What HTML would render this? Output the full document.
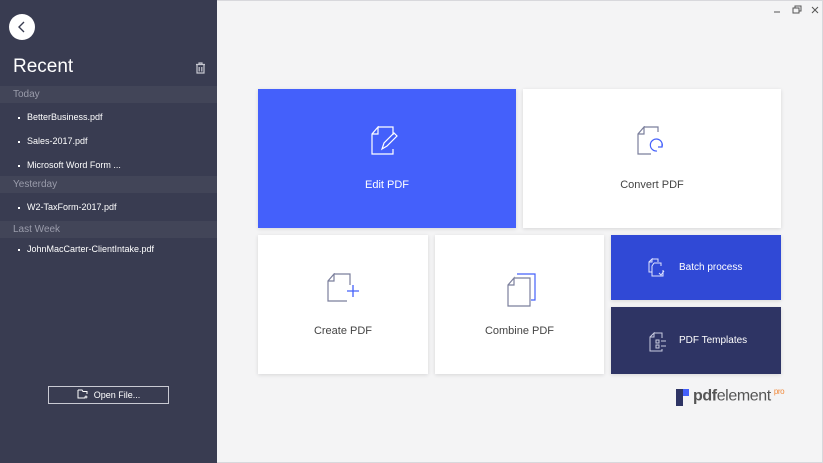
<!DOCTYPE html>
<html><head><style>
*{margin:0;padding:0;box-sizing:border-box}
body{width:823px;height:463px;overflow:hidden;background:#f4f4f5;font-family:"Liberation Sans",sans-serif;position:relative}
.side{position:absolute;left:0;top:0;width:217px;height:463px;background:#393c51;color:#fff}
.back{position:absolute;left:9px;top:14px;width:26px;height:26px;border-radius:50%;background:#fff}
.recent{position:absolute;left:13px;top:56px;font-size:19px;color:#fff}
.band{position:absolute;left:0;width:217px;height:17px;background:#424558;color:#9a9cab;font-size:10px;padding-left:13px;line-height:17px}
.item{position:absolute;left:18px;font-size:9px;color:#fff}
.item:before{content:"";display:inline-block;width:2px;height:2px;background:#fff;margin-right:7px;vertical-align:middle}
.open{position:absolute;left:48px;top:386px;width:121px;height:18px;border:1px solid #c9cad3;font-size:9px;color:#fff;text-align:center;line-height:16px}
.t{position:absolute;box-shadow:0 1px 4px rgba(0,0,0,.12);font-size:11px;text-align:center}
.t svg{position:absolute}
.win{position:absolute;right:0;top:0;width:606px;height:463px;border:1px solid #d8d8dc;border-left:none}
</style></head><body>
<div class="win"></div>
<div class="side">
<div class="back"><svg width="26" height="26"><path d="M15 8 L10 13 L15 18" stroke="#393c51" stroke-width="1.4" fill="none"/></svg></div>
<div class="recent">Recent</div>
<svg style="position:absolute;left:195px;top:62px" width="11" height="12"><path d="M1 2.5H10M4 2.5V1H7V2.5M2 3V11H9V3M4.2 5V9.5M6.8 5V9.5" stroke="#c6c7d0" stroke-width="1.2" fill="none"/></svg>
<div class="band" style="top:86px">Today</div>
<div class="item" style="top:112px">BetterBusiness.pdf</div>
<div class="item" style="top:136px">Sales-2017.pdf</div>
<div class="item" style="top:160px">Microsoft Word Form ...</div>
<div class="band" style="top:176px">Yesterday</div>
<div class="item" style="top:202px">W2-TaxForm-2017.pdf</div>
<div class="band" style="top:221px">Last Week</div>
<div class="item" style="top:244px">JohnMacCarter-ClientIntake.pdf</div>
<div class="open"><svg width="12" height="10" style="vertical-align:-1px;margin-right:5px"><path d="M1 1H5L6 2.5H10V5M1 1V9H8M9 6.5V9.5M7.5 8H10.5" stroke="#fff" fill="none"/></svg>Open File...</div>
</div>
<svg style="position:absolute;left:774px;top:5px" width="45" height="10"><path d="M0 7H6" stroke="#555"/><path d="M19 3H25V8H19ZM21 3V1H27V6H25" stroke="#555" fill="none"/><path d="M38 2L44 8M44 2L38 8" stroke="#555"/></svg>

<div class="t" style="left:258px;top:89px;width:258px;height:139px;background:#4460fb;color:#fff">
<svg style="left:113px;top:37px" width="30" height="32"><path d="M7 1H22V9M22 23V28H1V8L7 1V8H1" stroke="#fff" stroke-width="1.2" fill="none"/><path d="M11 23L13 17L23 7L26 10L16 20Z" stroke="#fff" stroke-width="1.2" fill="none"/></svg>
<div style="position:absolute;top:90px;width:100%">Edit PDF</div></div>
<div class="t" style="left:523px;top:89px;width:258px;height:139px;background:#fff;color:#444">
<svg style="left:114px;top:37px" width="32" height="32"><path d="M7 1H21V6M14 28H1V8L7 1V8H1" stroke="#7b7f9c" stroke-width="1.2" fill="none"/><path d="M25 21A6 6 0 1 0 20 25M25 17V21H21" stroke="#4460fb" stroke-width="1.2" fill="none"/></svg>
<div style="position:absolute;top:90px;width:100%">Convert PDF</div></div>
<div class="t" style="left:258px;top:235px;width:170px;height:139px;background:#fff;color:#444">
<svg style="left:69px;top:38px" width="34" height="32"><path d="M7 1H23V12M20 28H1V8L7 1V8H1" stroke="#7b7f9c" stroke-width="1.2" fill="none"/><path d="M26 12V24M20 18H32" stroke="#4460fb" stroke-width="1.3"/></svg>
<div style="position:absolute;top:90px;width:100%">Create PDF</div></div>
<div class="t" style="left:435px;top:235px;width:169px;height:139px;background:#fff;color:#444">
<svg style="left:72px;top:38px" width="30" height="34"><path d="M10 1H28V27H24" stroke="#4460fb" stroke-width="1.2" fill="none"/><path d="M7 5H23V33H1V12L7 5V12H1" stroke="#7b7f9c" stroke-width="1.2" fill="none"/></svg>
<div style="position:absolute;top:90px;width:100%">Combine PDF</div></div>
<div class="t" style="left:611px;top:235px;width:170px;height:65px;background:#3049d6;color:#fff;font-size:10px">
<svg style="left:37px;top:23px" width="18" height="20"><path d="M4 1H10V4M1 4L4 1V4H1V14H4M6 5H13V8M6 5L4 8V18H15V12M11 15L13 17L16 13" stroke="#e0e4ff" stroke-width="1" fill="none"/></svg>
<div style="position:absolute;left:68px;top:27px">Batch process</div></div>
<div class="t" style="left:611px;top:307px;width:170px;height:67px;background:#2e3464;color:#fff;font-size:10px">
<svg style="left:38px;top:25px" width="18" height="20"><path d="M5 1H13V6M13 17V19H1V5L5 1V5H1M7 8H10V11H7ZM12 9H17M7 13H10V16H7ZM12 14H17" stroke="#c8cbe0" stroke-width="1" fill="none"/></svg>
<div style="position:absolute;left:68px;top:28px">PDF Templates</div></div>
<svg style="position:absolute;left:676px;top:389px" width="15" height="17"><rect x="0" y="0" width="7" height="17" fill="#2e3464"/><rect x="7" y="0" width="6" height="7" fill="#4460fb"/></svg>
<div style="position:absolute;left:693px;top:387px;font-size:16px;color:#555;letter-spacing:-0.4px"><b>pdf</b>element<sup style="font-size:8px;color:#f08a3c;margin-left:3px">pro</sup></div>
</body></html>
